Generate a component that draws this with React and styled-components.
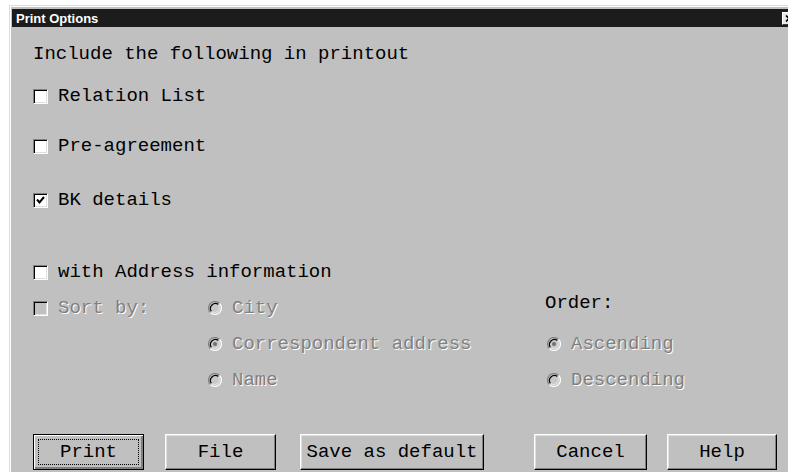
import styled, { createGlobalStyle } from "styled-components";

const GlobalStyle = createGlobalStyle`
  html, body {
    margin: 0;
    background: #ffffff;
    overflow: hidden;
  }
`;

const Window = styled.div`
  box-sizing: border-box;
  margin: 5px 0 0 9px;
  width: 789px;
  height: 467px;
  padding: 3px 0 0 2px;
  background: #c0c0c0;
  border-top: 1px solid #dcdcdc;
  border-left: 1px solid #dcdcdc;
  box-shadow: inset 1px 1px #ffffff;
  display: flex;
  flex-direction: column;
`;

const TitleBar = styled.div`
  height: 18px;
  background: #1c1c1c;
  display: flex;
  align-items: center;
  padding-left: 4px;
`;

const Title = styled.span`
  flex: 1;
  color: #ffffff;
  font-family: "Liberation Sans", Arial, sans-serif;
  font-weight: bold;
  font-size: 13px;
`;

const CloseBox = styled.span`
  box-sizing: border-box;
  display: flex;
  align-items: center;
  justify-content: center;
  width: 14px;
  height: 13px;
  margin-right: 2px;
  background: #e8e8e8;
  border: 1px solid #ffffff;
  border-right-color: #404040;
  border-bottom-color: #404040;
`;

const Content = styled.div`
  display: flex;
  flex-direction: column;
  padding-left: 21px;
  font-family: "Liberation Mono", "Courier New", monospace;
  font-size: 19px;
  color: #000;
`;

const Row = styled.div`
  display: flex;
  align-items: center;
  gap: 10px;
  height: 24px;
  margin-top: ${({ $mt }) => $mt}px;
`;

const Label = styled.span`
  white-space: pre;
  color: ${({ $disabled }) => ($disabled ? "#808080" : "#000")};
  text-shadow: ${({ $disabled }) => ($disabled ? "1px 1px 0 #ffffff" : "none")};
`;

const Box = styled.span`
  box-sizing: border-box;
  display: inline-flex;
  align-items: center;
  justify-content: center;
  width: 15px;
  height: 15px;
  flex: none;
  background: ${({ $disabled }) => ($disabled ? "#c0c0c0" : "#ffffff")};
  border: 1px solid;
  border-color: #808080 #ffffff #ffffff #808080;
  box-shadow: inset 1px 1px #000000, inset -1px -1px #dfdfdf;
`;

const SortGrid = styled.div`
  display: grid;
  grid-template-columns: 175px 337px auto;
  grid-auto-rows: 24px;
  row-gap: 12px;
  margin-top: 12px;
`;

const Cell = styled.div`
  display: flex;
  align-items: center;
  gap: 10px;
  padding-left: ${({ $pl }) => $pl || 0}px;
  margin-top: ${({ $mt }) => $mt || 0}px;
`;

const ButtonRow = styled.div`
  display: flex;
  margin-top: 42px;
`;

const Button = styled.button`
  box-sizing: border-box;
  width: ${({ $w }) => $w}px;
  height: 36px;
  margin-left: ${({ $ml }) => $ml}px;
  padding: 0;
  background: #c0c0c0;
  font-family: "Liberation Mono", "Courier New", monospace;
  font-size: 19px;
  color: #000;
  border: 1px solid;
  border-color: ${({ $default }) =>
    $default ? "#000000" : "#ffffff #000000 #000000 #ffffff"};
  box-shadow: ${({ $default }) =>
    $default
      ? "inset 1px 1px #ffffff, inset -2px -2px #808080"
      : "inset -1px -1px #808080, inset 1px 1px #dfdfdf"};
  display: flex;
  align-items: center;
  justify-content: center;
`;

const Focus = styled.span`
  box-sizing: border-box;
  display: flex;
  align-items: center;
  justify-content: center;
  width: calc(100% - 8px);
  height: calc(100% - 8px);
  border: 1px dotted #000;
`;

const Check = () => (
  <svg width="9" height="9" viewBox="0 0 9 9">
    <path d="M1 3.5 L3.5 6.5 L8 1" fill="none" stroke="#000" strokeWidth="2" />
  </svg>
);

const CloseIcon = () => (
  <svg width="8" height="7" viewBox="0 0 8 7">
    <path d="M1 0.5 L7 6.5 M7 0.5 L1 6.5" stroke="#000" strokeWidth="1.6" />
  </svg>
);

const Checkbox = ({ checked, disabled }) => (
  <Box $disabled={disabled}>{checked && <Check />}</Box>
);

// classic sunken radio button, drawn as bevelled arcs
const Radio = ({ checked }) => (
  <svg width="14" height="14" viewBox="0 0 14 14" style={{ flex: "none" }}>
    <circle cx="7" cy="7" r="5.5" fill="#c8c8c8" />
    <path d="M11.6 2.4 A6.5 6.5 0 0 0 2.4 11.6" fill="none" stroke="#808080" strokeWidth="1.2" />
    <path d="M2.4 11.6 A6.5 6.5 0 0 0 11.6 2.4" fill="none" stroke="#ffffff" strokeWidth="1.2" />
    <path d="M10.5 3.5 A5 5 0 0 0 3.5 10.5" fill="none" stroke="#000000" strokeWidth="1.2" />
    <path d="M3.5 10.5 A5 5 0 0 0 10.5 3.5" fill="none" stroke="#dfdfdf" strokeWidth="1.2" />
    {checked && <circle cx="7" cy="7" r="2" fill="#707070" />}
  </svg>
);

const App = () => (
  <>
    <GlobalStyle />
    <Window>
      <TitleBar>
        <Title>Print Options</Title>
        <CloseBox>
          <CloseIcon />
        </CloseBox>
      </TitleBar>
      <Content>
        <Row $mt={15}>
          <Label>Include the following in printout</Label>
        </Row>
        <Row $mt={18}>
          <Checkbox />
          <Label>Relation List</Label>
        </Row>
        <Row $mt={26}>
          <Checkbox />
          <Label>Pre-agreement</Label>
        </Row>
        <Row $mt={30}>
          <Checkbox checked />
          <Label>BK details</Label>
        </Row>
        <Row $mt={48}>
          <Checkbox />
          <Label>with Address information</Label>
        </Row>
        <SortGrid>
          <Cell>
            <Checkbox disabled />
            <Label $disabled>Sort by:</Label>
          </Cell>
          <Cell>
            <Radio />
            <Label $disabled>City</Label>
          </Cell>
          <Cell $mt={-10}>
            <Label>Order:</Label>
          </Cell>
          <div />
          <Cell>
            <Radio checked />
            <Label $disabled>Correspondent address</Label>
          </Cell>
          <Cell $pl={2}>
            <Radio checked />
            <Label $disabled>Ascending</Label>
          </Cell>
          <div />
          <Cell>
            <Radio />
            <Label $disabled>Name</Label>
          </Cell>
          <Cell $pl={2}>
            <Radio />
            <Label $disabled>Descending</Label>
          </Cell>
        </SortGrid>
        <ButtonRow>
          <Button $w={111} $ml={0} $default>
            <Focus>Print</Focus>
          </Button>
          <Button $w={111} $ml={21}>File</Button>
          <Button $w={184} $ml={24}>Save as default</Button>
          <Button $w={113} $ml={50}>Cancel</Button>
          <Button $w={110} $ml={20}>Help</Button>
        </ButtonRow>
      </Content>
    </Window>
  </>
);

export default App;
